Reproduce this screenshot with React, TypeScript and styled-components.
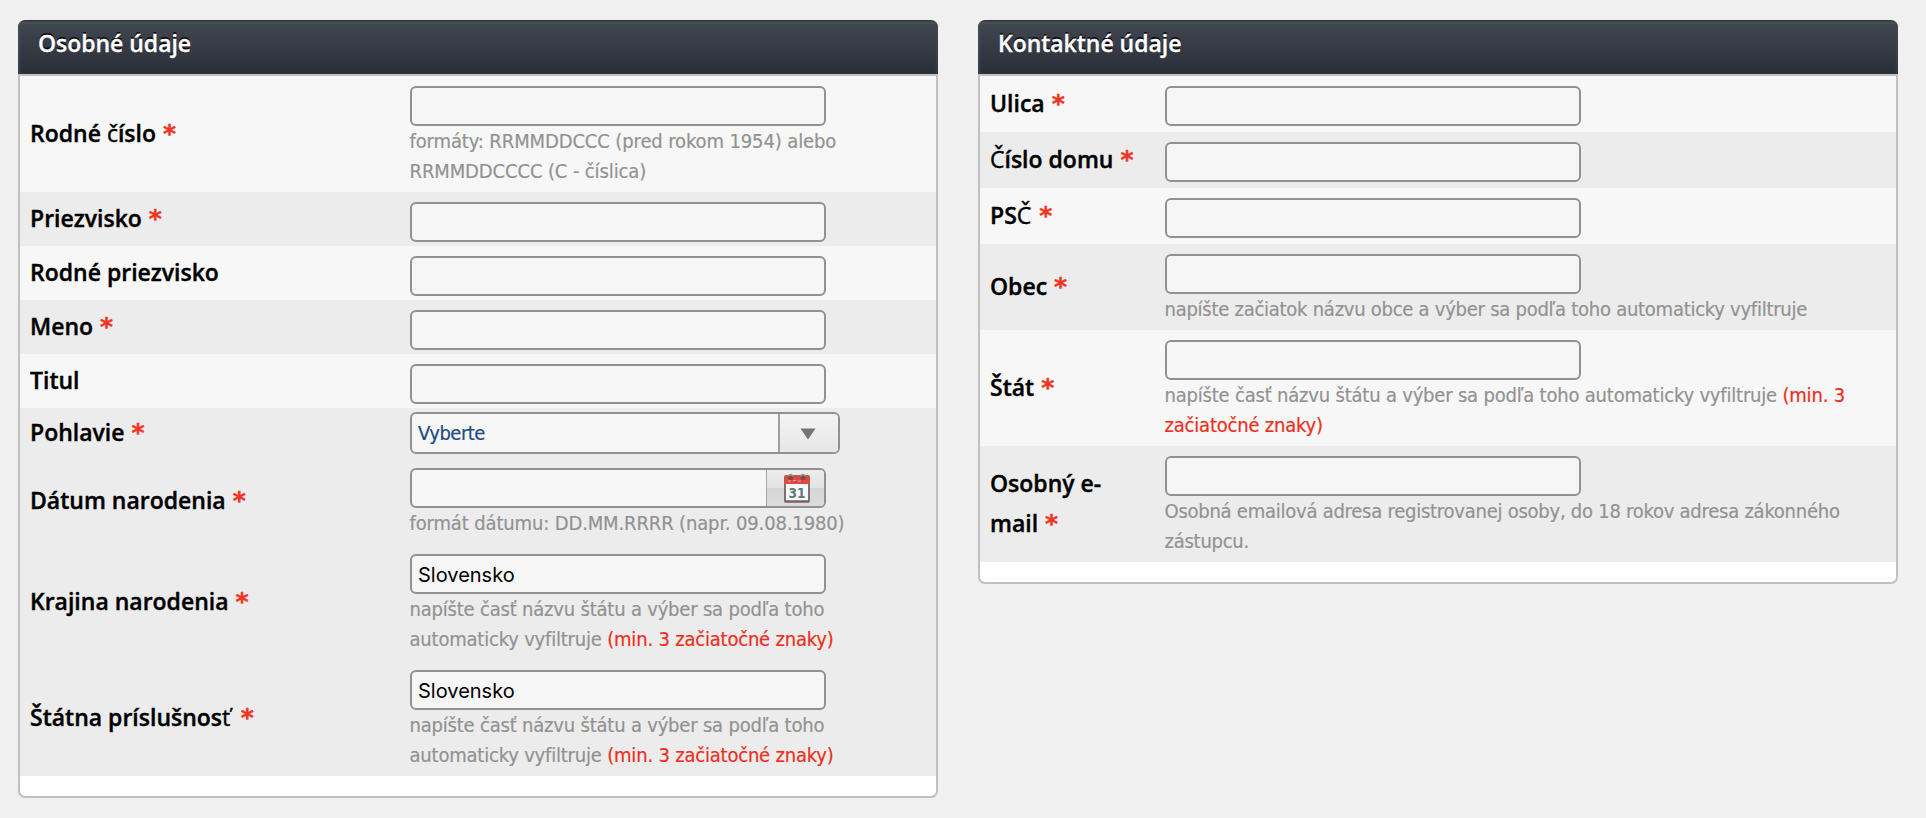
import React from "react";
import styled, { createGlobalStyle } from "styled-components";

const GlobalStyle = createGlobalStyle`
  *, *::before, *::after { box-sizing: border-box; }
  body { margin: 0; background: #f0f0f0; color: #000; }
`;

const Page = styled.main`
  display: flex;
  align-items: flex-start;
  gap: 40px;
  padding: 20px 18px;
`;

const Panel = styled.section`
  width: 920px;
  flex: none;
`;

const PanelHeader = styled.h2`
  margin: 0;
  height: 54px;
  padding: 5px 20px 0;
  border-top: 1px solid #2d3531;
  border-radius: 7px 7px 0 0;
  background: linear-gradient(#3f454b 0, #4a505b 2px, #41454f 4px, #2a2e39 100%);
  box-shadow: inset 2px 0 2px rgba(74, 84, 94, 0.6), inset -2px 0 2px rgba(74, 84, 94, 0.3);
  color: #fff;
  font: 600 23px/34px "Open Sans", "Noto Sans", sans-serif;
  letter-spacing: -0.03px;
  -webkit-text-stroke: 0.3px #fff;
  text-shadow: 0 -2px 0 #0b0c10;
`;

const PanelBody = styled.div`
  padding-bottom: 20px;
  border: 2px solid #c0c0c0;
  border-radius: 0 0 7px 7px;
  background: #fff;
`;

const Row = styled.div<{ $labelWidth: number; $dark?: boolean; $compact?: boolean; $select?: boolean }>`
  display: grid;
  grid-template-columns: ${(p) => p.$labelWidth}px 1fr;
  align-items: center;
  padding: ${(p) => (p.$select ? "4px 0 4px" : p.$compact ? "10px 0 4px" : "10px 0 6px")};
  padding-left: 10px;
  background: ${(p) => (p.$dark ? "#ececec" : "#f7f7f7")};
`;

const Label = styled.label<{ $shift: number }>`
  position: relative;
  top: ${(p) => p.$shift}px;
  font: 600 23px/40px "Open Sans", "Noto Sans", sans-serif;
  -webkit-text-stroke: 0.4px currentColor;
  white-space: nowrap;
`;

const Light = styled.span<{ $gap?: number }>`
  margin-right: ${(p) => p.$gap ?? 0}px;
  font-weight: 400;
`;

const Star = styled.span`
  margin-left: 1px;
  color: #ee3524;
  font-family: "DejaVu Sans", sans-serif;
  font-size: 25px;
  font-weight: 700;
  line-height: 0;
`;

const Field = styled.div`
  min-width: 0;
`;

const Control = styled.div<{ $wide?: boolean }>`
  display: flex;
  width: ${(p) => (p.$wide ? 430 : 416)}px;
  height: ${(p) => (p.$wide ? 42 : 40)}px;
  border: 2px solid #919191;
  border-radius: 6px;
  background: #f6f6f6;
  overflow: hidden;
`;

const Input = styled.input`
  flex: 1;
  min-width: 0;
  padding: 1px 6px 0;
  border: 0;
  outline: 0;
  background: transparent;
  color: #000;
  font: 400 20px "Inter", sans-serif;
`;

const Choice = styled.span`
  flex: 1;
  padding-left: 6px;
  color: #1d4b82;
  font: 400 20px/38px "DejaVu Sans Condensed", "DejaVu Sans", sans-serif;
  font-stretch: condensed;
  letter-spacing: -0.5px;
  -webkit-text-stroke: 0.2px currentColor;
`;

const SelectButton = styled.span`
  display: flex;
  align-items: center;
  justify-content: center;
  width: 60px;
  padding: 2px 3px 0 0;
  border-left: 2px solid #a0a0a0;
  background: linear-gradient(#f4f4f4, #e6e6e6);
`;

const DateButton = styled.span`
  display: flex;
  align-items: center;
  justify-content: center;
  width: 58px;
  border-left: 1px solid #a6a6a6;
  padding-left: 3px;
  background: linear-gradient(#ededed 0, #e2e2e2 50%, #d6d6d6 50%, #dcdcdc 100%);
`;

const Hint = styled.div<{ $tracking?: number }>`
  margin-left: -0.5px;
  color: #929292;
  font: 400 20px/30px "DejaVu Sans Condensed", "DejaVu Sans", sans-serif;
  font-stretch: condensed;
  letter-spacing: ${(p) => p.$tracking ?? -0.2}px;
  -webkit-text-stroke: 0.2px currentColor;
  white-space: nowrap;
`;

const Warning = styled.span`
  color: #ee2f20;
`;

const ArrowIcon = () => (
  <svg width="16" height="12" viewBox="0 0 16 12">
    <path d="M.5 .5h15L8 11.5z" fill="#747474" />
  </svg>
);

const CalendarIcon = () => (
  <svg width="28" height="30" viewBox="0 0 28 30">
    <defs>
      <linearGradient id="calTop" x1="0" y1="0" x2="0" y2="1">
        <stop offset="0" stopColor="#cf4b44" />
        <stop offset="1" stopColor="#e04a42" />
      </linearGradient>
    </defs>
    <rect x="2" y="3" width="24" height="25.5" rx="1.5" fill="#f6fafa" stroke="#81706f" strokeWidth="2" />
    <path d="M1.5 2.5h25V11h-25z" fill="url(#calTop)" />
    <path d="M5 8h3M10 7.5h3M15 8h3" stroke="#f0a09b" strokeWidth="1.2" />
    <path d="M1.5 28.5h25" stroke="#76605e" strokeWidth="2" />
    <circle cx="7.5" cy="4.5" r="2.6" fill="#8c4440" />
    <circle cx="20" cy="4.5" r="2.6" fill="#8c4440" />
    <path d="M5.5 3.5a2 2 0 0 1 4 0M18 3.5a2 2 0 0 1 4 0" fill="none" stroke="#9a9a9a" strokeWidth="1.5" />
    <text x="14" y="24.5" textAnchor="middle" fontFamily="DejaVu Sans" fontWeight="700" fontSize="13.5" textLength="17" lengthAdjust="spacingAndGlyphs" fill="#61777a">31</text>
  </svg>
);

type Kind = "text" | "select" | "date";
interface FieldDef {
  label: React.ReactNode;
  required?: boolean;
  dark?: boolean;
  compact?: boolean;
  kind?: Kind;
  value?: string;
  hint?: React.ReactNode;
  tracking?: number;
}

const stateHint = (
  <>
    napíšte časť názvu štátu a výber sa podľa toho
    <br />
    automaticky vyfiltruje <Warning>(min. 3 začiatočné znaky)</Warning>
  </>
);

const personal: FieldDef[] = [
  {
    label: <>Rodné <Light>č</Light>íslo</>,
    required: true,
    hint: <>formáty: RRMMDDCCC (pred rokom 1954) alebo<br />RRMMDDCCCC (C - číslica)</>,
    tracking: -0.12,
  },
  { label: "Priezvisko", required: true, dark: true, compact: true },
  { label: "Rodné priezvisko", compact: true },
  { label: "Meno", required: true, dark: true, compact: true },
  { label: "Titul", compact: true },
  { label: "Pohlavie", required: true, dark: true, kind: "select", value: "Vyberte" },
  {
    label: "Dátum narodenia",
    required: true,
    dark: true,
    kind: "date",
    hint: "formát dátumu: DD.MM.RRRR (napr. 09.08.1980)",
    tracking: -0.14,
  },
  { label: "Krajina narodenia", required: true, dark: true, value: "Slovensko", hint: stateHint },
  { label: <>Štátna príslušnos<Light $gap={3.5}>ť</Light></>, required: true, dark: true, value: "Slovensko", hint: stateHint },
];

const contact: FieldDef[] = [
  { label: "Ulica", required: true },
  { label: <><Light>Č</Light>íslo domu</>, required: true, dark: true },
  { label: <>PS<Light $gap={1}>Č</Light></>, required: true },
  {
    label: "Obec",
    required: true,
    dark: true,
    hint: "napíšte začiatok názvu obce a výber sa podľa toho automaticky vyfiltruje",
    tracking: -0.26,
  },
  {
    label: "Štát",
    required: true,
    hint: (
      <>
        napíšte časť názvu štátu a výber sa podľa toho automaticky vyfiltruje{" "}
        <Warning>(min. 3<br />začiatočné znaky)</Warning>
      </>
    ),
  },
  {
    label: <>Osobný e-<br />mail</>,
    required: true,
    dark: true,
    hint: <>Osobná emailová adresa registrovanej osoby, do 18 rokov adresa zákonného<br />zástupcu.</>,
    tracking: -0.25,
  },
];

function FieldControl({ kind = "text", value = "" }: { kind?: Kind; value?: string }) {
  if (kind === "select") {
    return (
      <Control $wide>
        <Choice>{value}</Choice>
        <SelectButton><ArrowIcon /></SelectButton>
      </Control>
    );
  }
  return (
    <Control>
      <Input defaultValue={value} />
      {kind === "date" && <DateButton><CalendarIcon /></DateButton>}
    </Control>
  );
}

function FormPanel({ title, labelWidth, fields }: { title: string; labelWidth: number; fields: FieldDef[] }) {
  return (
    <Panel>
      <PanelHeader>{title}</PanelHeader>
      <PanelBody>
        {fields.map((f, i) => (
          <Row key={i} $labelWidth={labelWidth} $dark={f.dark} $compact={f.compact} $select={f.kind === "select"}>
            <Label $shift={f.kind === "select" ? -1 : f.compact ? -4 : -3}>
              {f.label}
              {f.required && <> <Star>*</Star></>}
            </Label>
            <Field>
              <FieldControl kind={f.kind} value={f.value} />
              {f.hint && <Hint $tracking={f.tracking}>{f.hint}</Hint>}
            </Field>
          </Row>
        ))}
      </PanelBody>
    </Panel>
  );
}

export default function App() {
  return (
    <>
      <GlobalStyle />
      <Page>
        <FormPanel title="Osobné údaje" labelWidth={380} fields={personal} />
        <FormPanel title="Kontaktné údaje" labelWidth={175} fields={contact} />
      </Page>
    </>
  );
}
